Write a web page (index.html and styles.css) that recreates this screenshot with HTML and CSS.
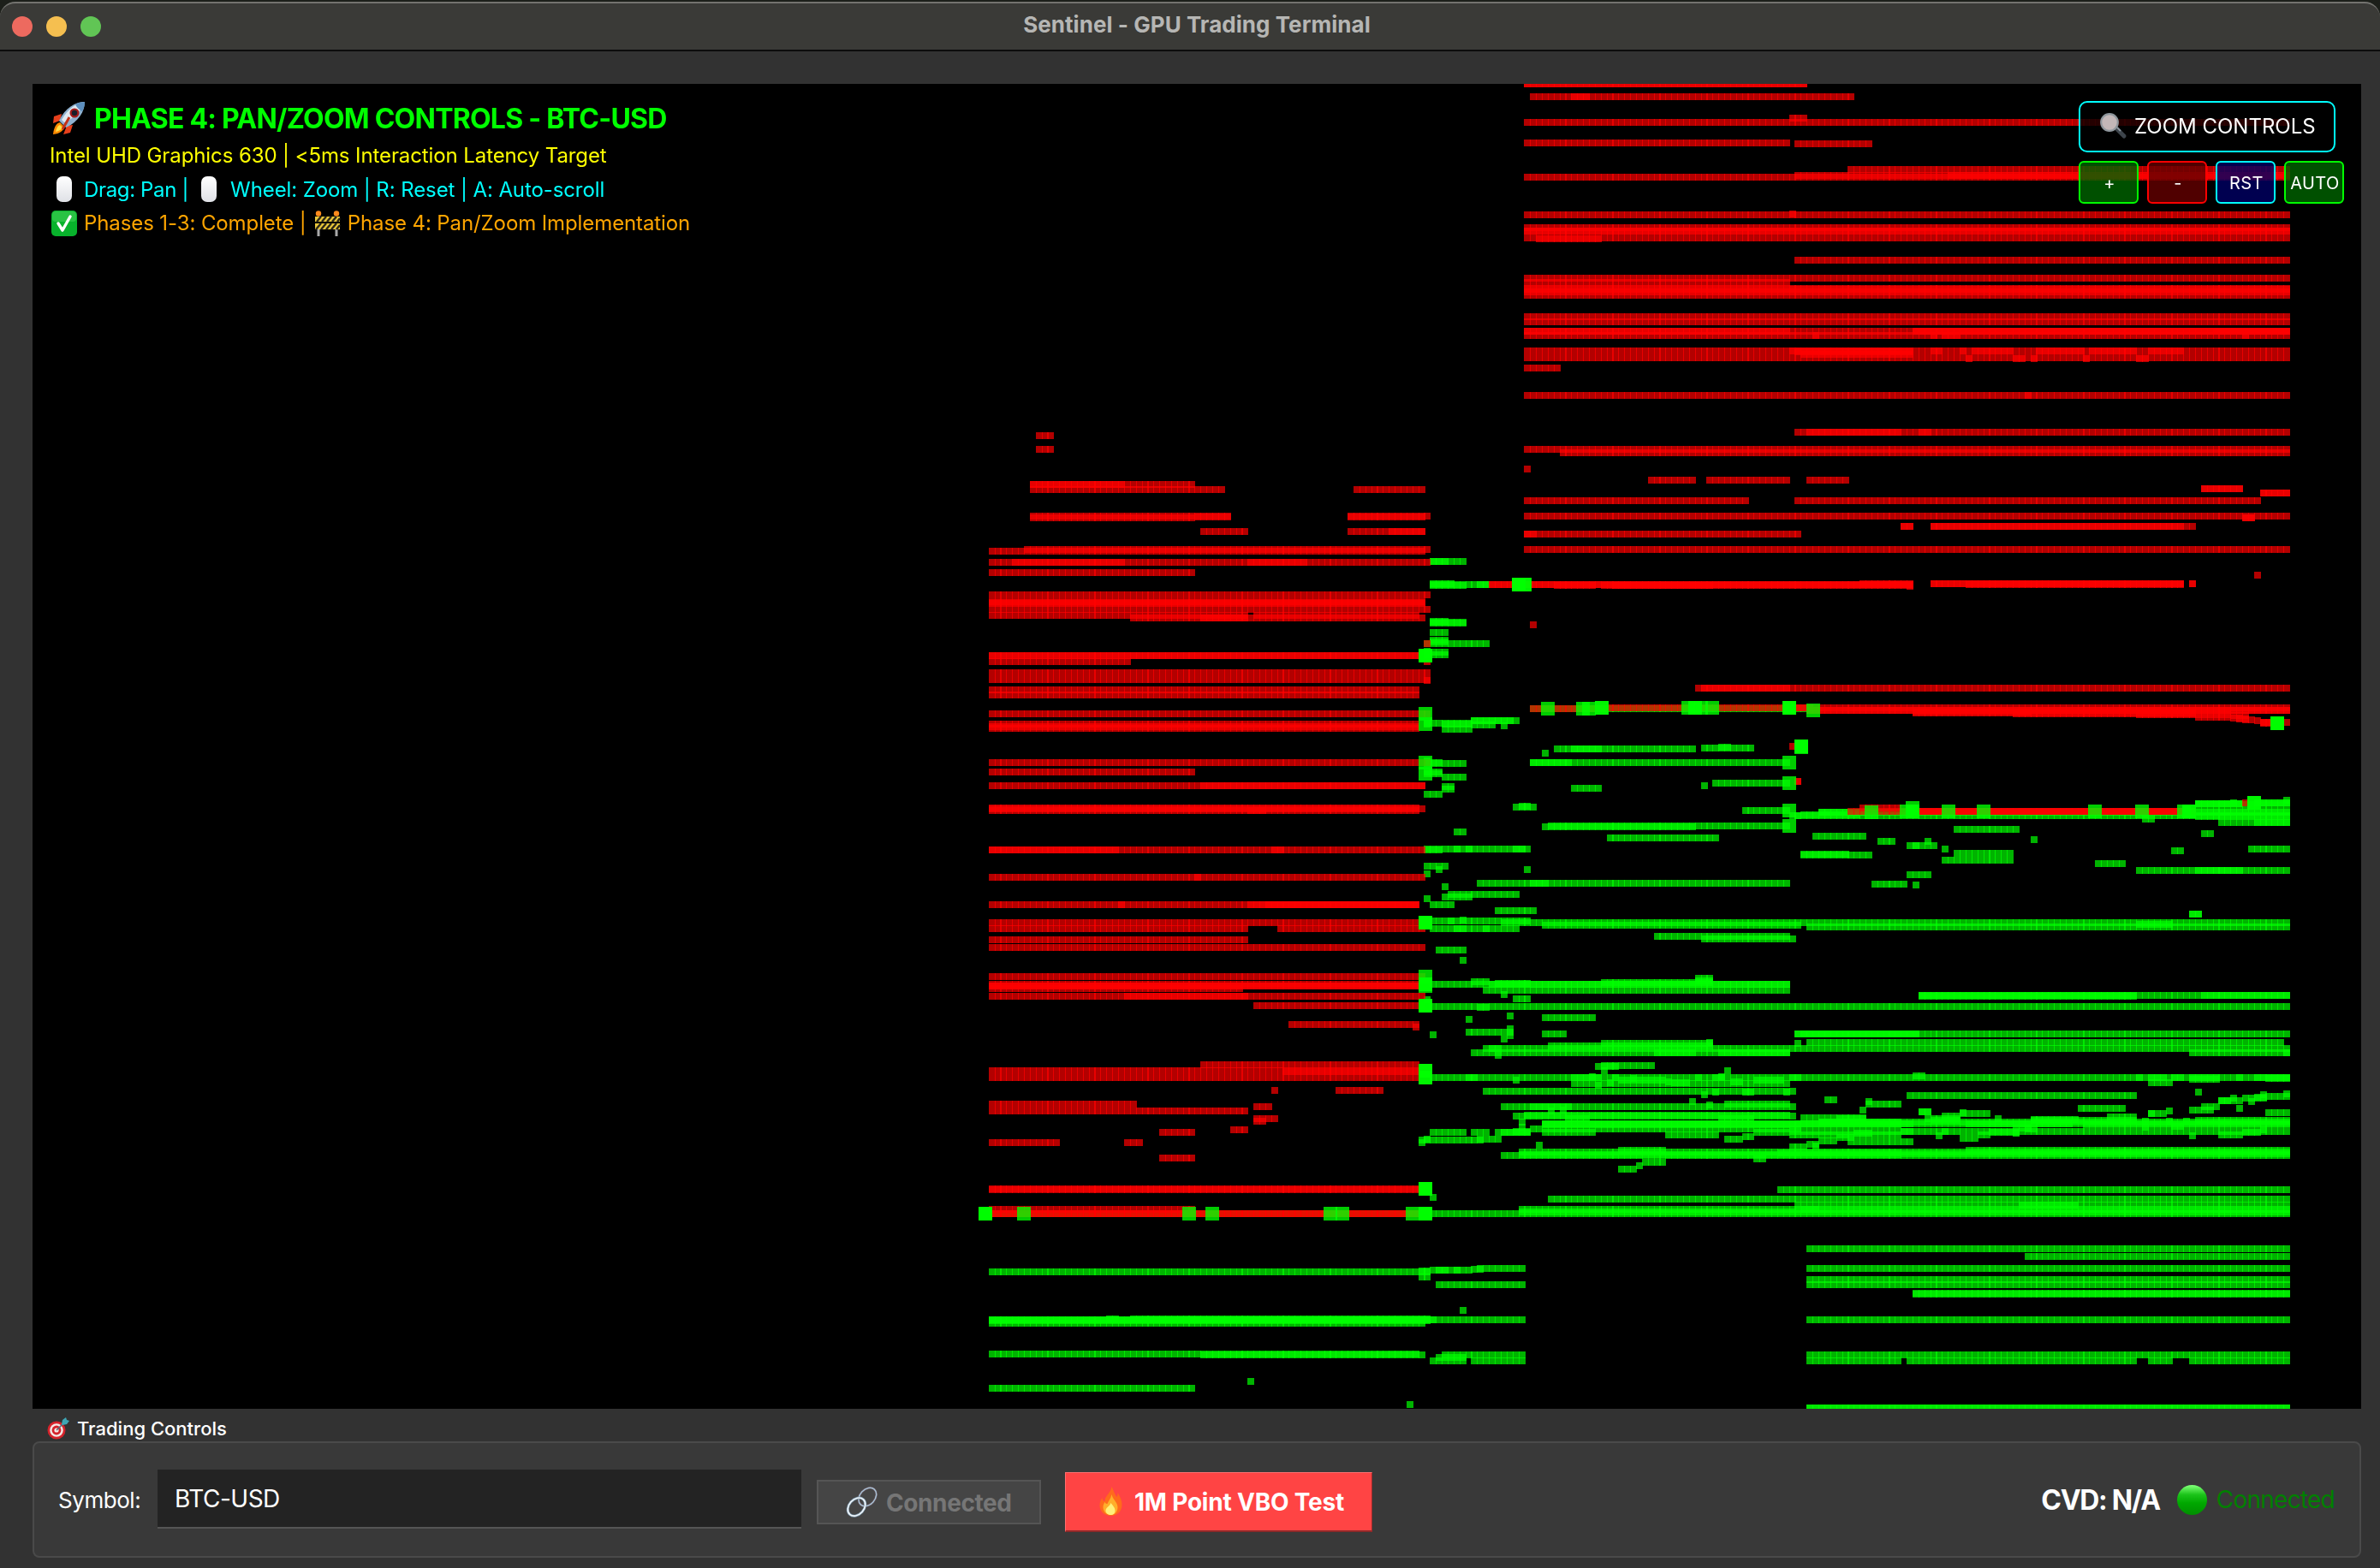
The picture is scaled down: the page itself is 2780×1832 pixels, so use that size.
FILE: index.html
```html
<!DOCTYPE html>
<html lang="en">
<head>
<meta charset="utf-8">
<title>Sentinel - GPU Trading Terminal</title>
<link rel="stylesheet" href="styles.css">
</head>
<body>
<div class="window">
  <header class="titlebar">
    <div class="lights"><i class="light close"></i><i class="light minimize"></i><i class="light zoom"></i></div>
    <h1 class="title">Sentinel - GPU Trading Terminal</h1>
  </header>

  <main class="content">
    <section class="chart">
      <canvas class="depth" id="depth" width="2720" height="1548"></canvas>

      <div class="hud">
        <div class="hud-title">
          <svg class="ic rocket" viewBox="0 0 40 40">
            <path d="M12 15L3 18l-1 8 8-3zM25 28l-3 9-8 2 4-10z" fill="#e8401c"/>
            <path d="M10 25c-4 1-7 5-8 14 8-1 12-4 13-9z" fill="#ff8a00"/>
            <path d="M10 28c-3 1-4 4-5 8 4-1 6-2 8-5z" fill="#ffe04a"/>
            <path d="M39 1C28 1 16 8 9 23l8 8C32 24 39 12 39 1z" fill="#8fb1cf"/>
            <path d="M39 1C30 2 19 9 12 22l3 3C27 20 35 10 39 1z" fill="#dfe9f1"/>
            <path d="M39 1c-4 0-8 1-11 3 2 4 4 6 8 8 2-4 3-7 3-11z" fill="#5c8fbe"/>
            <circle cx="27" cy="14" r="5.5" fill="#a51c1c"/><circle cx="27" cy="14" r="3.2" fill="#1a1f2a"/>
            <path d="M21 19l-8 14" stroke="#c23018" stroke-width="3"/>
          </svg>
          <span class="headline">PHASE 4: PAN/ZOOM CONTROLS - BTC-USD</span>
        </div>
        <div class="hud-line yellow"><span>Intel UHD Graphics 630 | &lt;5ms Interaction Latency Target</span></div>
        <div class="hud-line cyan">
          <i class="pill"></i><span class="drag">Drag: Pan |</span><i class="pill second"></i><span>Wheel: Zoom | R: Reset | A: Auto-scroll</span>
        </div>
        <div class="hud-line orange">
          <svg class="ic check" viewBox="0 0 30 30"><rect width="30" height="30" rx="5" fill="#08b22c"/><rect x="1" y="1" width="28" height="12" rx="4" fill="#3fce55" opacity=".6"/><path d="M8 15l5 8L22 7" fill="none" stroke="#fff" stroke-width="3.4" stroke-linecap="round" stroke-linejoin="round"/></svg>
          <span>Phases 1-3: Complete |</span>
          <svg class="ic barrier" viewBox="0 0 31 30">
            <path d="M5 20v10M26 20v10" stroke="#a9a9a9" stroke-width="3"/>
            <path d="M1 7h29v6H1zM1 15h29v7H1z" fill="#e8c63a"/>
            <path d="M3 13l5-6M9 13l5-6M15 13l5-6M21 13l5-6M27 13l3-4M2 22l6-7M8 22l6-7M14 22l6-7M20 22l6-7M26 22l4-5" stroke="#2a2618" stroke-width="2.4"/>
            <circle cx="5" cy="3.5" r="3.2" fill="#ff8a1c"/><circle cx="26" cy="3.5" r="3.2" fill="#ff8a1c"/>
          </svg>
          <span>Phase 4: Pan/Zoom Implementation</span>
        </div>
      </div>

      <div class="zoom-controls">
        <div class="zoom-title">
          <svg class="ic glass" viewBox="0 0 32 32">
            <path d="M19 19l9 9" stroke="#3d444b" stroke-width="5" stroke-linecap="round"/>
            <path d="M20 18l4 4" stroke="#8b959e" stroke-width="2"/>
            <circle cx="11" cy="12" r="9.8" fill="#c3b7b8" stroke="#8f979d" stroke-width="2.2"/>
          </svg>
          <span>ZOOM CONTROLS</span>
        </div>
        <div class="zoom-buttons">
          <button class="zb green">+</button><button class="zb red">-</button><button class="zb blue">RST</button><button class="zb green">AUTO</button>
        </div>
      </div>
    </section>

    <section class="controls">
      <h2 class="controls-title">
        <svg class="ic target" viewBox="0 0 26 26">
          <circle cx="11" cy="15" r="10.5" fill="#d5232b"/><circle cx="11" cy="15" r="7.8" fill="#f4e9e6"/><circle cx="11" cy="15" r="5.4" fill="#d5232b"/><circle cx="11" cy="15" r="2.6" fill="#f4e9e6"/>
          <path d="M11 15l9-9" stroke="#5c6c78" stroke-width="1.6"/><path d="M17 8l1-5 4-3 1 3 3 1-3 4-5 1z" fill="#3fa6b4"/>
        </svg>
        <span>Trading Controls</span>
      </h2>
      <div class="panel">
        <label class="label" for="symbol">Symbol:</label>
        <input class="symbol" id="symbol" value="BTC-USD">
        <button class="connect" disabled>
          <svg class="ic link" viewBox="0 0 36 36" fill="none">
            <ellipse cx="24.3" cy="11" rx="12" ry="8.8" transform="rotate(-48 24.3 11)" stroke="#5d4f55" stroke-width="3"/>
            <ellipse cx="24.3" cy="11" rx="12" ry="8.8" transform="rotate(-48 24.3 11)" stroke="#a9c2d6" stroke-width="1.5"/>
            <ellipse cx="11.5" cy="22.6" rx="11.8" ry="8.8" transform="rotate(-48 11.5 22.6)" stroke="#7c98ad" stroke-width="3"/>
            <ellipse cx="11.5" cy="22.6" rx="11.8" ry="8.8" transform="rotate(-48 11.5 22.6)" stroke="#f0f6fa" stroke-width="1.7"/>
          </svg>
          <span>Connected</span>
        </button>
        <button class="vbo">
          <svg class="ic flame" viewBox="0 0 26 34">
            <path d="M14 0c3 6 3 8 6 12 1-1 1-3 1-5 3 5 5 9 5 14 0 8-6 13-13 13S0 29 0 22c0-4 1-6 3-9 0 2 1 4 3 4 0-7 7-9 8-17z" fill="#ff6a1c"/>
            <path d="M14 9c1 6 7 9 7 15 0 5-3 9-8 9s-9-4-9-9c0-3 1-4 2-6 1 2 2 2 3 2 1-3 4-6 5-11z" fill="#ffae2a"/>
            <path d="M13 19c2 3 5 5 5 9 0 3-2 5-5 5s-6-2-6-5c0-4 5-5 6-9z" fill="#fff07a"/>
          </svg>
          <span>1M Point VBO Test</span>
        </button>
        <div class="status">
          <span class="cvd">CVD: N/A</span>
          <i class="ball"></i>
          <span class="connected">Connected</span>
        </div>
      </div>
    </section>
  </main>
</div>
<script src="depth.js"></script>
</body>
</html>
```
FILE: styles.css
```css
* { box-sizing: border-box; }
body {
  margin: 0;
  background: #1c1f1a;
  font-family: Inter, "Liberation Sans", sans-serif;
}
.window {
  width: 2780px;
  height: 1832px;
  padding-top: 2px;
  display: flex;
  flex-direction: column;
  overflow: hidden;
}
.titlebar {
  height: 58px;
  flex: none;
  display: grid;
  grid-template-columns: 1fr auto 1fr;
  align-items: center;
  background: #3a3a37;
  border-top: 2px solid #73736f;
  border-bottom: 2px solid #0c0c0c;
  border-radius: 18px 18px 0 0;
}
.lights { display: flex; gap: 16px; padding-left: 14px; }
.light { width: 24px; height: 24px; border-radius: 50%; }
.close { background: #ed6a5f; }
.minimize { background: #f5bf50; }
.zoom { background: #61c555; }
.title {
  margin: 0 0 4px;
  padding-left: 16px;
  font-size: 26px;
  line-height: 32px;
  font-weight: 700;
  letter-spacing: .05px;
  color: #b6b6b4;
  white-space: nowrap;
}
.content {
  flex: 1;
  padding: 38px 22px 12px 38px;
  background: #323232;
  display: flex;
  flex-direction: column;
}
.chart {
  height: 1548px;
  flex: none;
  position: relative;
  background: #000;
  overflow: hidden;
}
.depth { display: block; }
.ic { display: block; flex: none; overflow: visible; }
.hud {
  position: absolute;
  left: 20px;
  top: 16px;
}
.hud-title, .hud-line { display: flex; align-items: center; white-space: nowrap; }
.hud-title { height: 48px; font-size: 32px; font-weight: 700; color: #0f0; }
.headline { letter-spacing: -.77px; }
.hud-line { height: 39.5px; font-size: 24px; letter-spacing: -.1px; }
.yellow { color: #ff0; }
.cyan { color: #0ff; }
.orange { color: #ffa500; }
.rocket { width: 40px; height: 40px; margin: 0 10px 0 2px; }
.pill {
  width: 18px;
  height: 30px;
  margin: 0 14px 0 8px;
  border-radius: 7px;
  background: linear-gradient(#fff, #dfe1e6);
}
.drag { letter-spacing: -.35px; }
.pill.second { margin: 0 16px 0 15px; }
.check { width: 30px; height: 30px; margin: 0 8px 0 2px; }
.barrier { width: 31px; height: 30px; margin: 0 8px 0 9px; }

.zoom-controls {
  position: absolute;
  left: 2390px;
  top: 20px;
  display: flex;
  flex-direction: column;
  gap: 10px;
}
.zoom-title {
  width: 300px;
  height: 60px;
  padding: 0 0 2px 23px;
  display: flex;
  align-items: center;
  gap: 8px;
  border: 2px solid #0ff;
  border-radius: 10px;
  background: rgba(0, 0, 0, .8);
  color: #fff;
  font-size: 24px;
  white-space: nowrap;
}
.glass { width: 32px; height: 32px; }
.zoom-buttons { display: flex; gap: 10px; }
.zb {
  width: 70px;
  height: 50px;
  padding: 2px 0 0 2px;
  border: 2px solid;
  border-radius: 6px;
  color: #fff;
  font: 20px Inter, sans-serif;
  letter-spacing: .4px;
  white-space: nowrap;
}
.zb.green { border-color: #0f0; background: rgba(0, 100, 0, .8); }
.zb.red { border-color: #f00; background: rgba(100, 0, 0, .8); }
.zb.blue { border-color: #0ff; background: rgba(0, 0, 100, .8); }

.controls { display: flex; flex-direction: column; }
.controls-title {
  height: 38px;
  margin: 0;
  padding: 8px 0 0 17px;
  display: flex;
  align-items: center;
  gap: 9px;
  font-size: 22px;
  font-weight: 500;
  color: #fff;
}
.target { width: 26px; height: 26px; }
.panel {
  height: 136px;
  padding: 0 29px 0 28px;
  display: flex;
  align-items: center;
  border: 2px solid #4a4a4a;
  border-radius: 8px;
  background: #393939;
  white-space: nowrap;
}
.label { width: 116px; flex: none; font-size: 26px; letter-spacing: -.45px; color: #fff; }
.symbol {
  width: 752px;
  height: 69px;
  margin-bottom: 1px;
  padding: 0 20px;
  border: 0;
  border-bottom: 2px solid #555;
  background: #232323;
  color: #fff;
  font: 28px Inter, sans-serif;
  letter-spacing: -.5px;
}
.connect, .vbo {
  display: flex;
  align-items: center;
  font: 700 28px Inter, sans-serif;
}
.connect {
  width: 262px;
  height: 52px;
  margin: 6px 28px 0 18px;
  padding: 2px 0 0 33px;
  gap: 10px;
  border: 2px solid #555;
  background: #454545;
  color: #767676;
  letter-spacing: -.4px;
}
.link { width: 36px; height: 36px; }
.vbo {
  width: 359px;
  height: 70px;
  margin-top: 5px;
  padding: 2px 0 0 39px;
  gap: 14px;
  border: solid;
  border-width: 1px 1px 2px;
  border-color: #ff7070 #9c2b2b #8f2929 #ff7070;
  background: #f44;
  color: #fff;
  letter-spacing: -.2px;
}
.flame { width: 27px; height: 34px; margin-top: -3px; }
.status { margin-left: auto; display: flex; align-items: center; }
.cvd { font-size: 32px; font-weight: 700; letter-spacing: -1.3px; color: #fff; }
.ball {
  width: 35px;
  height: 35px;
  margin: 0 11px 0 20px;
  border-radius: 50%;
  background: linear-gradient(#7dff75 2%, #1cc41a 32%, #00a800 60%, #008f00);
}
.connected { font-size: 28px; letter-spacing: -.75px; color: #008000; }
```
FILE: depth.js
```js
// Order-book depth history: every sample is an 8px cell, cells overlap slightly
// and accumulate opacity; trades are 16px markers drawn last.
const CELL = 8, TRADE = 16, LEFT = 38, TOP = 98;

const early = new Set([2,10,18,27,34,43,50,58,66,74,82,91,98,106,114,122,129,137,146,153,161,170,178,186,193,201,209,217]);
const cols = [1155];
for (let k = 1; k <= 220; k++) cols.push(cols[k - 1] + (early.has(k) ? 6 : 7));
const nearest = (x) => {
  let best = 0;
  for (let k = 1; k < cols.length; k++) if (Math.abs(cols[k] - x) < Math.abs(cols[best] - x)) best = k;
  return best;
};

// Segments: origin and scale, then runs [y, x0, x1, layers] and trades [y, x, layers].
const segments = [
 { x: 1130, y: 480, kx: 680 / 1568, ky: 1 / 3,
  bid: [[516,1245,1344],[516,1245,1296],[594,1245,1312],[600,1245,1344],[597,1245,1407],[597,1373,1407],[726,1245,1296],[729,1245,1344],[732,1245,1344],[765,1245,1296],[792,1245,1296],[798,1245,1296],[804,1229,1407],[834,1229,1296],[843,1229,1296],[831,1229,1247],[1083,1229,1360],[1086,1277,1360],[1104,1277,1360],[1089,1356,1407],[1074,1356,1407,2],[1086,1229,1247],[1221,1229,1280],[1224,1229,1344],[1215,1229,1247],[1254,1229,1280],[1260,1229,1280],[1272,1277,1344],[1305,1277,1312],[1314,1277,1312],[1332,1229,1280],[1464,1310,1344]],
  ask: [[75,184,233],[123,184,233],[246,168,613],[246,168,424],[264,168,694],[264,1040,1234],[357,168,710],[360,613,710],[363,168,613],[357,1024,1247],[360,1024,1234],[411,627,756],[411,1024,1234],[411,1134,1234],[480,58,1234],[474,152,1247],[519,58,1247],[519,120,424],[519,754,915],[555,58,613],[633,58,1247],[657,58,1234],[660,58,1234],[663,58,1234],[684,58,1247],[705,58,756],[705,770,1218],[714,438,1234],[714,627,756],[846,58,1220,2],[867,58,440],[867,1229,1247],[906,58,1247],[930,58,1247],[933,1229,1247],[966,58,1218],[984,58,1218],[1050,58,1247],[1086,58,1218],[1095,58,1218],[1101,58,1218],[1221,58,1247],[1254,58,613],[1302,58,1234],[1302,627,1234],[1380,58,1218],[1383,58,1234],[1389,58,1218],[1389,754,805],[804,1229,1247]],
  trades: [[585,1467,3],[585,1483,2],[834,1215,3],[1038,1215],[1074,1215],[1209,1215],[1248,1215]] },
 { x: 1130, y: 960, kx: 680 / 1568, ky: 680 / 1568,
  bid: [[65,1229,1407],[68,1229,1280],[65,1310,1326],[65,1342,1358],[111,1229,1296],[120,1261,1280],[131,1229,1247],[166,1277,1296],[187,1294,1407],[193,1277,1360],[198,1229,1247],[214,1245,1312],[157,1373,1407],[258,1245,1407],[258,1294,1312],[256,1326,1344],[278,1245,1407],[278,1310,1344],[278,1390,1407],[337,1261,1344],[364,1326,1344],[429,1245,1407],[422,1356,1407],[444,1390,1407],[489,1245,1407],[491,1373,1407],[470,1229,1247],[523,1342,1360],[558,1342,1407],[565,1245,1263],[613,1356,1407],[602,1388,1407],[680,1245,1407],[680,1342,1373],[717,1388,1407],[828,1245,1344],[828,1356,1407],[849,1215,1390],[846,1229,1247],[855,1215,1234],[846,1373,1407],[1003,1245,1263],[1046,58,1220],[1047,1245,1407],[1204,58,1247],[1201,1215,1247],[1217,1215,1247],[1199,1245,1360],[1199,1261,1296],[1199,1310,1328],[1197,1356,1390],[1194,1373,1407],[1238,1261,1407],[1307,1326,1344],[1333,58,1247,2],[1336,58,1247],[1342,58,1234],[1330,438,1247],[1330,374,408],[1333,1245,1407],[1333,1245,1263],[1425,58,1218],[1427,627,1234],[1427,1277,1407],[1434,1261,1344],[1443,1245,1344],[1443,1356,1407],[1499,754,772],[1517,58,613],[1561,1183,1201]],
  ask: [[67,58,1234],[67,58,408],[67,820,853],[141,58,1234],[141,611,630],[214,58,1218],[214,408,424],[214,754,1218],[214,800,1218],[263,58,1218],[279,58,756],[279,836,1234],[309,58,756],[330,58,1234],[408,58,1234],[429,58,1218],[433,58,1218,2],[441,58,742],[461,58,1234],[461,422,756],[487,770,1234],[537,865,1218],[544,1200,1218],[646,627,1218],[662,58,1218],[680,58,1218],[664,850,1218],[715,820,837],[715,992,1121],[752,58,457],[770,58,756],[759,770,821],[791,770,837],[798,770,805],[821,708,756],[828,517,613],[855,58,248],[855,422,473],[897,517,613],[980,58,1234],[982,58,1218],[1035,58,613],[1046,58,1220,2]],
  trades: [[254,1215,3],[399,1215],[420,1215,2],[424,1215],[477,1215,3],[653,1215,2],[671,1215,2],[971,1215,3],[1038,30,3],[1038,134],[1038,579],[1038,641],[1038,959],[1038,991],[1038,1181],[1038,1215,3]] },
 { x: 1740, y: 90, kx: 960 / 1568, ky: 560 / 1568,
  ask: [[11,65,606,2],[53,77,696],[53,155,191],[137,65,1527],[123,572,606],[204,65,573],[207,583,730],[316,65,1527],[311,583,1527],[311,873,1527],[291,683,1527],[439,65,1527],[437,572,585],[482,65,1527],[493,65,1527,2],[515,65,1527],[517,88,214],[588,583,1527],[647,65,1527],[661,65,573],[679,65,1527],[683,65,1527],[692,65,1527],[702,65,1527],[773,65,1527],[789,65,1527],[819,65,573,2],[819,573,1527],[834,65,1527],[820,808,1527,2],[834,616,629],[834,841,853],[834,862,898],[820,1380,1527],[834,1436,1448],[885,65,1527],[908,65,1527],[885,572,808],[888,583,808],[897,594,808],[885,841,864],[885,898,910],[885,920,1000],[885,1042,1136],[885,1143,1235],[885,1255,1325],[910,908,921],[910,998,1022],[910,1032,1045],[910,1132,1145],[910,1233,1258],[941,65,136],[1030,65,1527],[1030,1021,1034],[1151,583,1527],[1151,604,786],[1151,818,843],[1207,65,1527],[1217,134,1527],[1271,65,78],[1308,302,394],[1308,413,573],[1308,604,686],[1336,1357,1437,2],[1349,1470,1527,2],[1375,65,495],[1375,583,1472],[1425,65,1527],[1431,1436,1460,2],[1460,784,808,2],[1460,841,1347],[1460,841,1325],[1484,65,596],[1484,65,90],[1534,65,1527]] },
 { x: 1740, y: 640, kx: 960 / 1568, ky: 1 / 3,
  bid: [[594,0,57],[594,0,45],[609,0,11],[612,21,34],[552,77,606],[693,122,394],[693,155,214],[690,403,505],[687,436,461],[708,100,113],[741,77,573],[741,77,157],[813,425,573],[822,403,416],[831,155,214],[897,44,90],[894,56,78],[909,482,573],[927,572,594],[966,100,394],[963,111,573],[1005,224,438],[1044,0,78],[1044,44,67],[1116,65,78],[1164,0,573],[1164,77,113],[1203,0,57],[1260,10,90],[924,594,706],[927,583,1527],[915,627,715,2],[915,706,1527],[885,1345,1436,2],[888,1345,1527],[882,1413,1425],[882,1460,1527,2],[873,1514,1527],[912,1345,1527],[930,1345,1527],[939,1245,1269],[951,1390,1527],[951,1459,1527],[975,885,1011],[999,616,719],[1017,740,774],[1017,830,843],[1011,1032,1045],[1032,795,854],[1032,807,820],[1044,862,875],[1059,885,1000],[1083,862,1000],[1062,593,686],[1065,593,730],[1134,795,843],[1167,728,797],[1170,807,820],[990,1357,1382],[1050,1300,1325],[1044,1447,1527],[1095,1155,1214],[1119,1233,1527],[1119,1345,1438],[1272,1334,1359]],
  ask: [[84,1459,1472],[117,0,808,2],[120,122,203],[120,212,808],[120,234,425],[114,706,808],[123,795,808],[114,841,1325,2],[117,908,1325],[114,1334,1347,2],[258,77,90],[480,392,1527],[480,403,573],[552,77,228],[549,228,1527],[549,583,616],[558,604,1527,2],[567,807,1345],[564,807,1034],[570,998,1345],[573,1233,1345],[573,1345,1413],[582,1345,1413],[576,1413,1448],[585,1413,1436],[588,1425,1448],[591,1436,1460],[594,1459,1472],[600,1470,1490,2],[603,1470,1490],[600,1515,1527],[684,572,585],[807,583,596,2],[900,706,785],[912,683,1345],[912,820,1340,2],[882,1436,1448]],
  trades: [[540,98],[540,165],[540,177],[537,201,2],[537,366],[537,379,2],[537,390],[537,412],[537,559,3],[546,604],[672,581,2],[675,581],[729,559],[801,559],[897,559],[951,559],[903,715],[888,794],[900,782],[900,794,2],[900,862],[900,929],[900,1142],[900,1232],[900,1312],[900,1322,2],[870,1445,2],[591,1490,3]] },
 { x: 1740, y: 1060, kx: 1 / 3, ky: 1 / 3,
  bid: [[36,0,144],[42,39,1443],[51,183,1092],[57,1110,1443],[63,0,105],[90,576,1053],[99,741,1074],[258,0,1053,2],[255,18,144],[252,390,780],[279,0,1053],[237,720,783],[246,720,783],[294,39,63],[309,81,144],[336,0,1443],[369,60,84],[375,183,372],[414,60,84],[426,0,84],[438,60,84],[450,39,63],[432,183,270],[432,1068,1443,2],[432,1089,1443],[483,0,1443],[498,0,1053],[474,204,783],[465,390,783],[498,576,723],[498,801,1053],[462,759,783],[465,1068,1092],[462,1110,1443],[483,0,42],[507,18,42],[543,390,579],[546,369,453],[561,390,414],[561,822,846],[585,0,1443],[606,285,1053],[585,285,393],[582,348,372],[594,81,105],[603,411,435],[585,429,453],[594,450,618],[588,495,513],[600,618,639],[603,639,702],[585,720,744],[585,780,822],[582,801,822],[600,843,888],[594,924,1032],[612,369,393],[585,1050,1092],[633,0,1074],[645,741,765],[636,780,804],[636,885,927],[636,1029,1053],[669,699,723],[663,1173,1218],[687,39,1074],[687,141,288],[678,822,1053],[681,759,783],[669,1317,1341],[678,1317,1443],[699,1296,1320],[702,204,228],[699,246,270],[720,81,1074],[717,120,1053],[747,183,1443,2],[750,183,1443],[765,141,1092],[728,264,350],[728,801,927],[741,102,126],[759,102,126],[777,18,144],[774,81,144],[777,39,144],[777,183,372],[801,0,42],[786,615,804],[801,822,888],[792,885,927],[777,924,1050],[726,1089,1320],[729,1215,1320],[741,1150,1443,2],[774,1050,1443],[786,1050,1443],[795,1215,1275],[807,1152,1218],[780,1275,1340],[810,1254,1443],[822,162,186],[828,1050,1113],[819,1110,1152],[825,1131,1155],[858,39,1443],[855,102,1443],[846,102,1443],[840,450,618],[850,1008,1443],[870,924,969],[882,534,618],[894,513,537],[906,450,516],[978,1008,1443],[1011,204,1443],[1032,1068,1443],[1047,102,1443],[1056,102,1443],[1062,0,1443],[1047,1089,1150]] },
 { x: 2220, y: 1060, kx: 1 / 3, ky: 1 / 3,
  bid: [[12,1011,1056],[42,0,1365],[57,0,1365],[48,825,954],[297,63,1365],[297,63,828],[300,63,828],[297,1053,1365],[336,0,1365],[432,0,1365],[432,0,66,2],[462,0,1344],[483,0,1365],[498,1011,1365],[498,1341,1365],[585,0,1365],[579,42,87],[585,825,849],[585,867,933],[585,948,993],[603,867,954],[591,1011,1119],[585,1011,1119],[585,1176,1200],[585,1239,1365],[588,1278,1365],[648,21,828],[636,1032,1056],[642,1341,1365],[651,1278,1365],[645,1260,1284],[654,1239,1281],[657,1197,1281],[669,1218,1242],[657,1155,1179],[666,1113,1200],[666,1113,1155],[687,1053,1119],[693,1176,1200],[699,1011,1098],[708,1278,1365],[693,621,789],[705,63,108,2],[711,207,315],[708,207,231],[711,867,933],[711,867,891],[702,930,954],[720,144,210],[729,84,210],[735,105,210],[729,330,354],[741,0,1365],[747,0,45,2],[747,228,1365],[747,45,602],[732,456,624],[735,456,828],[723,723,828],[738,846,870],[738,930,954],[738,990,1014],[735,1032,1365],[750,640,1365],[759,846,870],[756,948,993],[774,0,1365],[774,0,45],[774,144,168],[789,123,147],[798,207,273],[786,270,315],[777,309,417],[762,393,459],[780,393,417],[765,435,480],[810,0,45],[786,1113,1200],[777,1197,1263],[768,1260,1284],[789,1011,1035],[846,0,1365],[858,0,1365],[840,228,1365],[852,0,1365],[978,0,1365],[1011,0,1365],[1032,0,1365],[1047,0,1365],[1056,0,1365],[1062,0,1365],[1032,414,624]] },
 { x: 1740, y: 1300, kx: 960 / 1568, ky: 1 / 3,
  bid: [[465,604,1527],[492,1021,1527],[534,0,69],[534,604,1527],[591,0,69],[573,604,1527],[591,604,1527],[621,807,1527],[624,807,1527],[714,0,69],[714,604,1527],[837,0,69],[858,0,69],[837,604,1527],[858,604,786],[858,795,1235],[858,1255,1303],[858,1334,1527],[1023,604,1527,2]] }
];

const ctx = document.getElementById('depth').getContext('2d');
const drawRuns = (key, color) => {
  ctx.fillStyle = color;
  for (const s of segments) for (const [y, x0, x1, n = 1] of s[key] || []) {
    const from = nearest(s.x + x0 * s.kx), to = Math.max(from, nearest(s.x + x1 * s.kx - CELL));
    const top = Math.round(s.y + y * s.ky) - TOP;
    for (let i = 0; i < n; i++) for (let k = from; k <= to; k++) ctx.fillRect(cols[k] - LEFT, top, CELL, CELL);
  }
};
drawRuns('bid', 'rgba(0,255,0,.7)');
drawRuns('ask', 'rgba(255,0,0,.7)');
ctx.fillStyle = 'rgba(0,255,0,.8)';
for (const s of segments) for (const [y, x, n = 1] of s.trades || [])
  for (let i = 0; i < n; i++)
    ctx.fillRect(Math.round(s.x + x * s.kx) - LEFT, Math.round(s.y + y * s.ky) - TOP, TRADE, TRADE);
```
